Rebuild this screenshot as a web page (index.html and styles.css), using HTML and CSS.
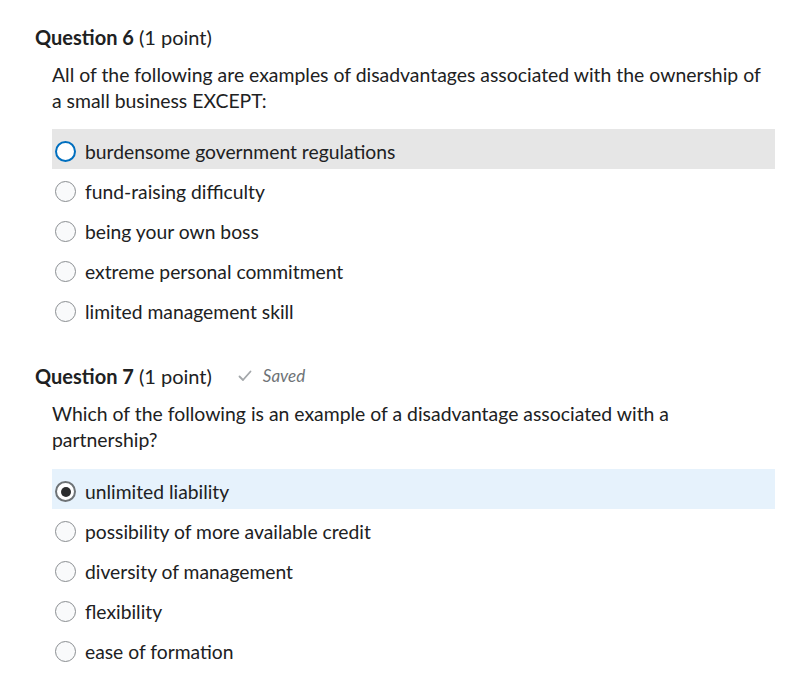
FILE: index.html
```html
<!DOCTYPE html>
<html>
<head>
<meta charset="utf-8">
<link rel="stylesheet" href="styles.css">
</head>
<body>
<div class="page">
  <section class="question q6">
    <h2 class="q-title"><strong>Question 6</strong> (1 point)</h2>
    <p class="q-text">All of the following are examples of disadvantages associated with the ownership of a small business EXCEPT:</p>
    <ul class="options">
      <li class="option hover"><span class="radio focus"></span><span class="label">burdensome government regulations</span></li>
      <li class="option"><span class="radio"></span><span class="label">fund-raising difficulty</span></li>
      <li class="option"><span class="radio"></span><span class="label">being your own boss</span></li>
      <li class="option"><span class="radio"></span><span class="label">extreme personal commitment</span></li>
      <li class="option"><span class="radio"></span><span class="label">limited management skill</span></li>
    </ul>
  </section>
  <section class="question q7">
    <h2 class="q-title"><strong>Question 7</strong> (1 point)
      <span class="saved"><svg class="check" width="14" height="12" viewBox="0 0 14 12"><path d="M1.5 6.5 L5 10 L12.5 1.5" fill="none" stroke="#a3a7aa" stroke-width="1.8" stroke-linecap="round" stroke-linejoin="round"/></svg><em>Saved</em></span>
    </h2>
    <p class="q-text">Which of the following is an example of a disadvantage associated with a partnership?</p>
    <ul class="options">
      <li class="option selected"><span class="radio checked"></span><span class="label">unlimited liability</span></li>
      <li class="option"><span class="radio"></span><span class="label">possibility of more available credit</span></li>
      <li class="option"><span class="radio"></span><span class="label">diversity of management</span></li>
      <li class="option"><span class="radio"></span><span class="label">flexibility</span></li>
      <li class="option"><span class="radio"></span><span class="label">ease of formation</span></li>
    </ul>
  </section>
</div>
</body>
</html>
```
FILE: styles.css
```css
* { box-sizing: border-box; }
html, body { margin: 0; padding: 0; background: #fff; }
body {
  font-family: Lato, "Noto Sans", sans-serif;
  color: #202122;
}
.page {
  padding: 23px 31px 0 35px;
}
.question { margin: 0; }
.q7 { margin-top: 33px; }
.q-title {
  margin: 0;
  font-size: 20px;
  line-height: 28px;
  font-weight: 400;
  display: flex;
  align-items: center;
}
.q-title strong { font-weight: 700; margin-right: 5px; }
.q-text {
  margin: 11px 0 0 17px;
  font-size: 19.4px;
  line-height: 26px;
  max-width: 716px;
}
.options {
  list-style: none;
  margin: 15px 0 0 17px;
  padding: 0;
}
.q7 .options { margin-top: 16px; }
.option {
  display: flex;
  align-items: center;
  height: 40px;
  padding-left: 3px;
  padding-top: 5px;
  font-size: 19.3px;
}
.option.hover { background: #e6e6e6; }
.option.selected { background: #e6f2fc; }
.radio {
  width: 21px;
  height: 21px;
  border-radius: 50%;
  border: 1px solid #8a8e91;
  background: #f9fafb;
  margin-right: 9px;
  flex: none;
  display: flex;
  align-items: center;
  justify-content: center;
}
.radio.focus {
  border: 2px solid #006fbf;
  background: #fff;
}
.radio.checked {
  border: 2px solid #6e7376;
  background: #fff;
}
.radio.checked::after {
  content: "";
  width: 10px;
  height: 10px;
  border-radius: 50%;
  background: #2b2c2d;
}
.label { line-height: 24px; }
.saved {
  display: inline-flex;
  align-items: center;
  margin-left: 26px;
  font-size: 17px;
  color: #6e7376;
}
.saved .check { margin-right: 11px; }
.saved em { font-style: italic; }
```
